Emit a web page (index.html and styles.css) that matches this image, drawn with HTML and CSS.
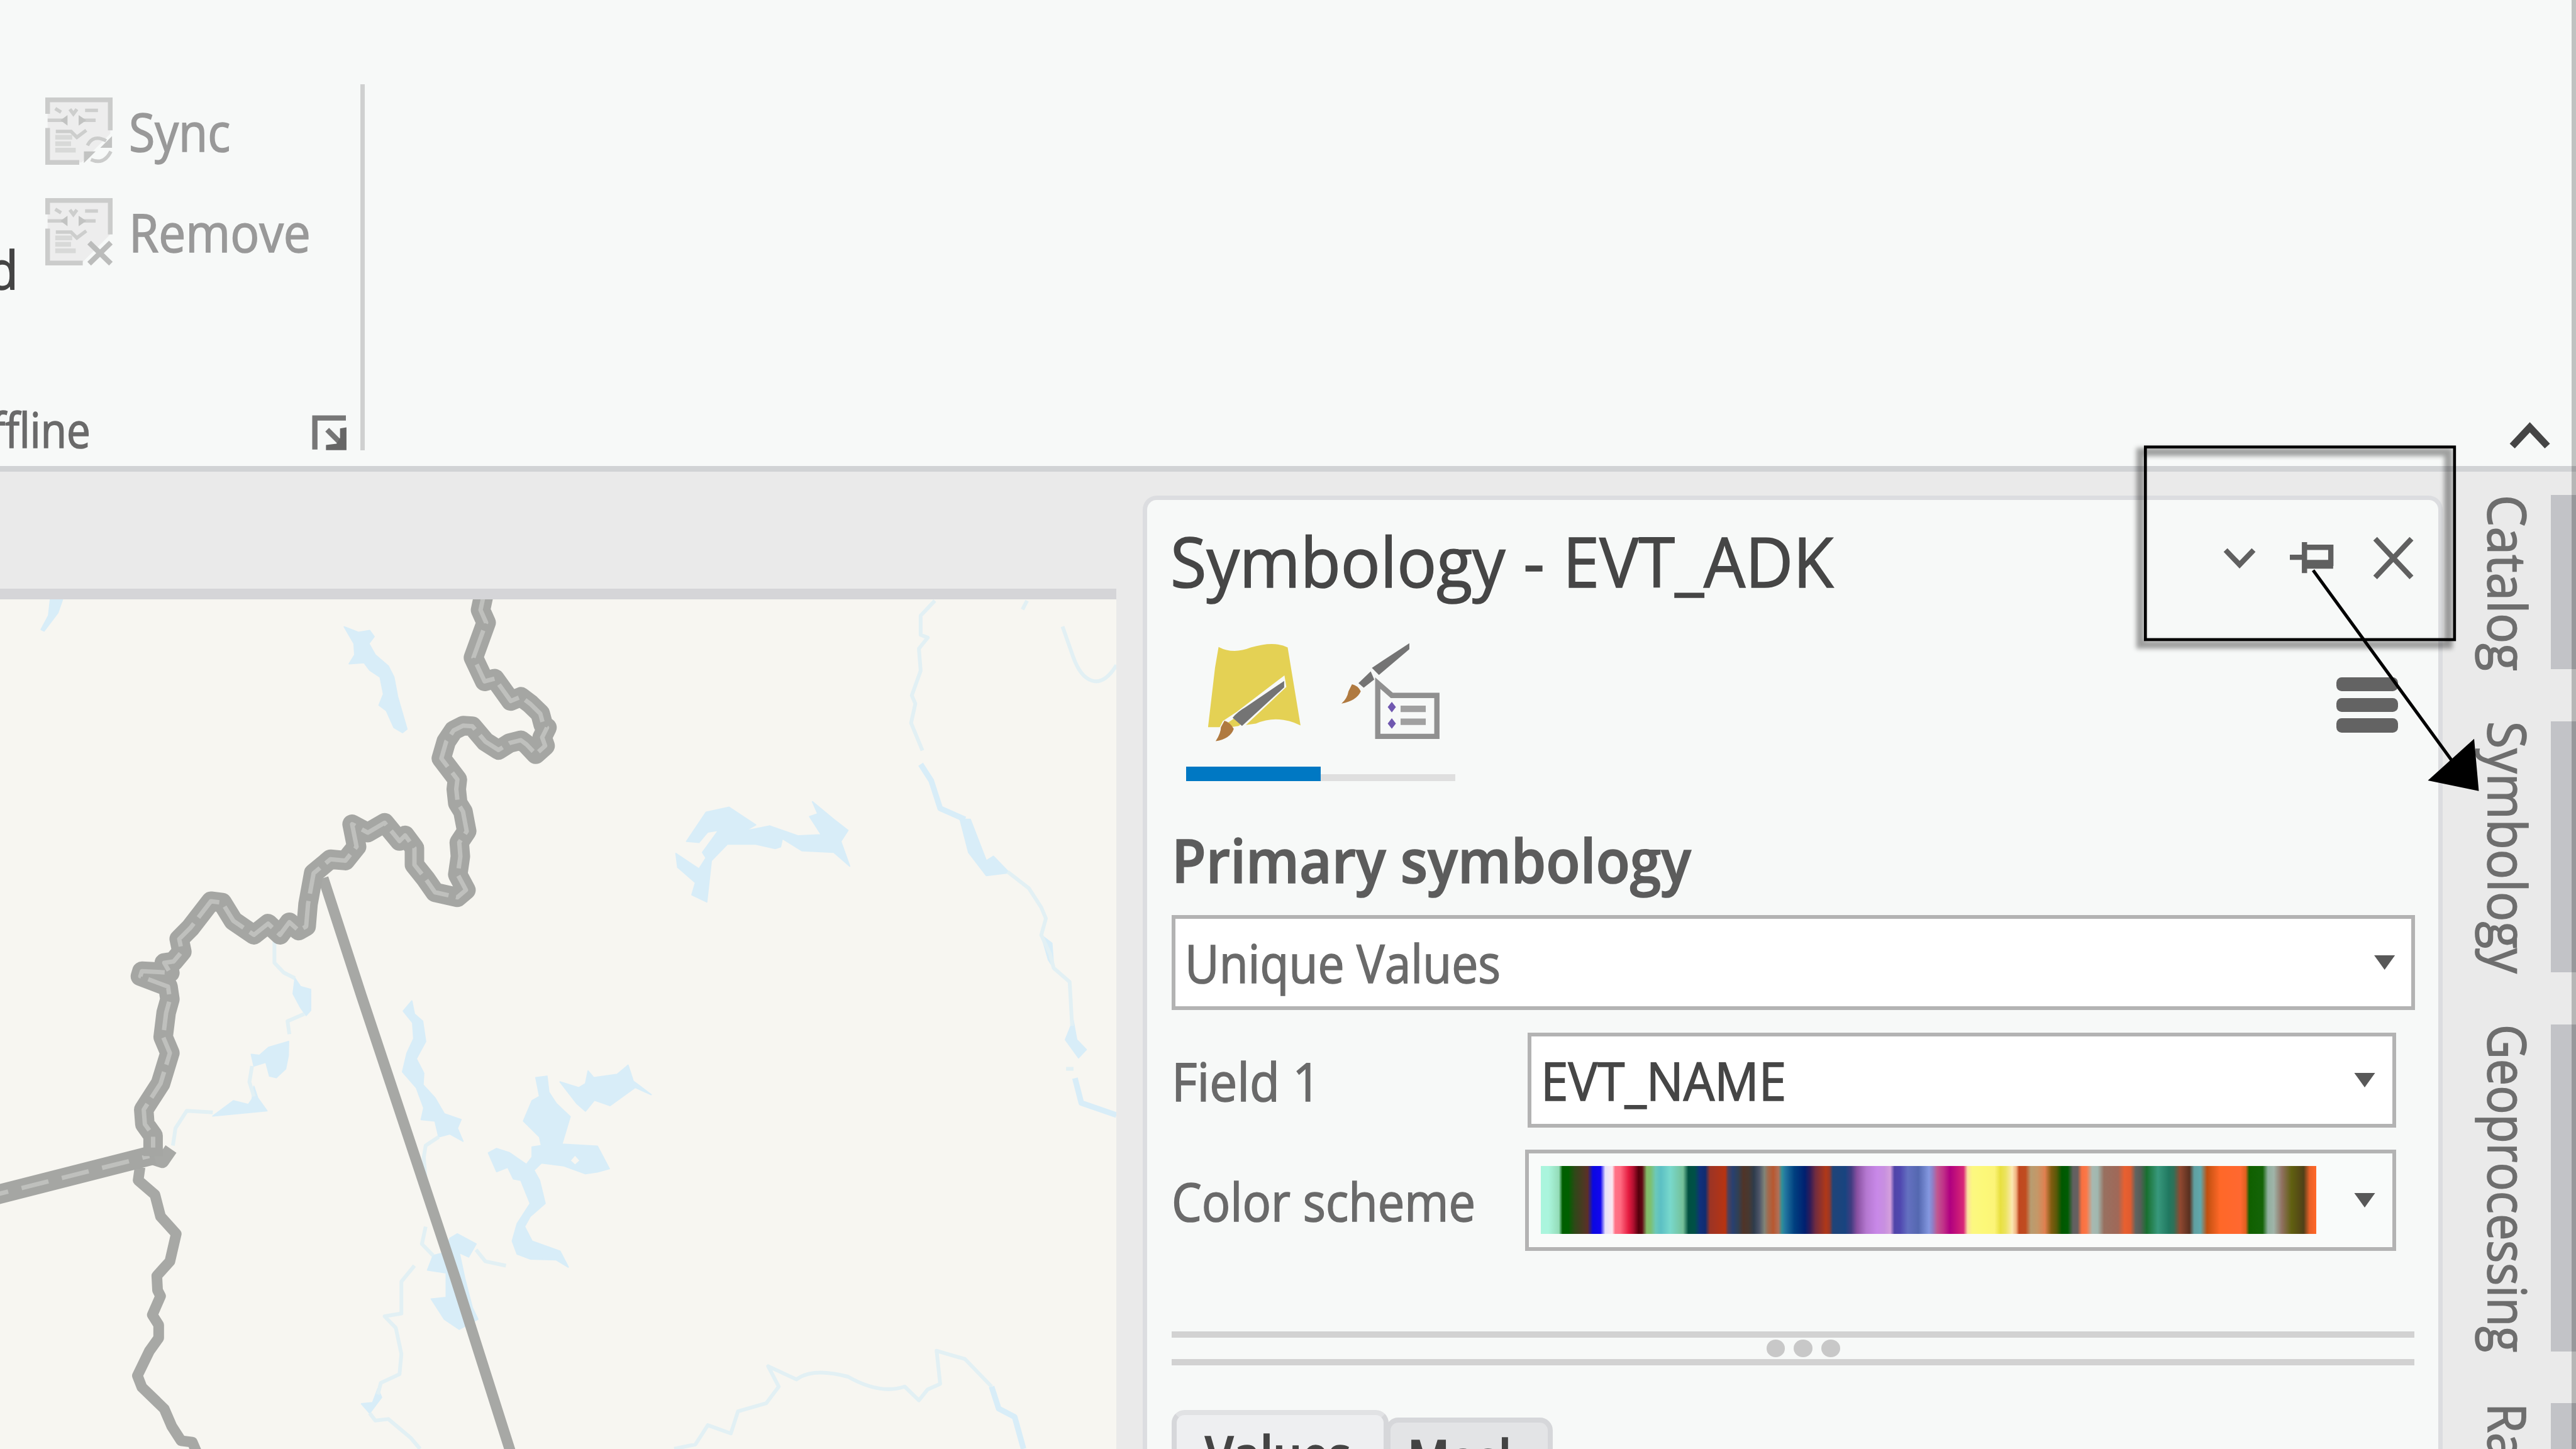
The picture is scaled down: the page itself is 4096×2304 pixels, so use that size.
FILE: index.html
```html
<!DOCTYPE html>
<html lang="en">
<head>
<meta charset="utf-8">
<title>Symbology</title>
<link rel="stylesheet" href="styles.css">
</head>
<body>
<div class="app">
  <header class="ribbon">
    <div class="group">
      <div class="group-body">
        <div class="big-button"><span class="fit">d</span></div>
        <div class="commands">
          <div class="command">
            <svg class="command-icon" viewBox="0 0 115 115">
              <path class="doc-fill" d="M4 4H111V62L62 111H4z"/>
              <path class="doc-line" d="M4 28V4H111V56M4 52V111H58"/>
              <path class="doc-mark" d="M4 39H34M86 39H60M17 19l10 6M42 20l6 8 6-8M68 22H90M18 58H44l10 10 16-12"/>
              <path class="doc-dark" d="M38 30V48L26 39zM57 30V48L70 39z"/>
              <path class="doc-text" d="M17 68H46M17 79H44M17 90H52"/>
              <path class="doc-line thin" d="M72 82Q82 62 104 74M112 92Q100 116 78 106"/>
              <path class="doc-dark" d="M114 66V86H94zM66 112V92H86z"/>
            </svg>
            <span class="fit sync">Sync</span>
          </div>
          <div class="command">
            <svg class="command-icon" viewBox="0 0 115 115">
              <path class="doc-fill" d="M4 4H111V62L62 111H4z"/>
              <path class="doc-line" d="M4 28V4H111V62M4 52V111H64"/>
              <path class="doc-mark" d="M4 39H34M86 39H60M17 19l10 6M42 20l6 8 6-8M68 22H90M18 58H44l10 10 16-12"/>
              <path class="doc-dark" d="M38 30V48L26 39zM57 30V48L70 39z"/>
              <path class="doc-text" d="M17 68H46M17 79H44M17 90H52"/>
              <path class="doc-cross" d="M75 76L112 112M112 76L75 112"/>
            </svg>
            <span class="fit remove">Remove</span>
          </div>
        </div>
      </div>
      <div class="group-footer">
        <span class="group-name"><span class="fit">ffline</span></span>
        <svg class="launcher" viewBox="0 0 61 62">
          <path d="M5 60V6H58" class="l1"/>
          <path d="M26 26L50 50" class="l1"/>
          <path d="M59 22V61H24V52L42 50L48 40V24z"/>
        </svg>
      </div>
    </div>
    <div class="group-divider"></div>
    <svg class="collapse" viewBox="0 0 70 44"><path d="M5 40L35 8L65 40"/></svg>
  </header>

  <div class="workspace">
    <main class="map-pane">
      <div class="view-tabs"></div>
      <svg class="map" viewBox="0 1024 1907 1451" preserveAspectRatio="none">
        <g transform="translate(0 980) scale(.63776 .47832)">
          <g class="lake">
            <path d="M135 90H168L155 140L118 205L110 200L130 150z"/>
            <path d="M922 190L960 210L990 203L1002 225L988 250L1005 290L1040 330L1055 370L1065 440L1090 555L1078 568L1055 550L1035 490L1015 470L1027 430L1018 370L990 345L975 318L935 322L950 290L948 250z"/>
            <path d="M790 1445L805 1475L832 1485L832 1560L820 1578L805 1550L785 1500z"/>
          </g>
          <path class="stream" d="M735 1310L735 1390L760 1425L790 1445"/>
        </g>
        <g transform="translate(0 1700) scale(.63776 .49428)">
          <g class="lake">
            <path d="M773 160L720 180L695 208L673 205L680 245L712 232L722 280L740 285L765 255L772 210z"/>
            <path d="M680 315L690 355L715 400L570 418L625 365L665 378L675 360z"/>
            <path d="M1103 20L1110 65L1132 90L1140 160L1115 220L1135 270L1133 310L1165 355L1190 410L1235 430L1225 460L1240 505L1205 480L1175 490L1165 435L1128 430L1135 390L1115 320L1078 265L1090 200L1108 150L1105 95L1080 55z"/>
            <path fill-rule="evenodd" d="M1435 285L1465 280L1470 335L1490 375L1527 420L1505 515L1600 522L1632 600L1600 611L1568 617L1510 590L1450 580L1430 605L1445 640L1460 720L1420 765L1405 800L1425 850L1500 885L1522 940L1490 915L1420 912L1385 895L1372 850L1385 790L1420 720L1395 640L1375 635L1360 595L1330 610L1308 545L1330 530L1365 545L1410 585L1425 560L1425 525L1450 520L1445 490L1402 435L1425 365L1445 350zM1527 572L1540 552L1554 572L1540 588z"/>
            <path d="M1500 300L1550 320L1568 306L1575 262L1590 285L1653 274L1682 242L1696 297L1744 344L1701 319L1634 382L1592 363L1568 401L1545 375z"/>
            <path d="M1225 825L1275 860L1255 905L1230 890L1245 980L1265 1080L1280 1120L1230 1155L1190 1120L1155 1050L1195 1045L1195 960L1145 950L1160 900L1190 890L1205 840z"/>
            <path d="M1012 1360L1022 1390L990 1445L968 1412L998 1408z"/>
          </g>
          <path class="stream" d="M815 65L770 90L775 135M675 245L668 300L680 350M570 405L500 400L470 460L463 520M1175 490L1140 520L1135 560L1140 640M1140 800L1130 860L1160 900M1275 880L1300 920L1355 935"/>
          <path class="stream" d="M1110 935L1075 990L1075 1100L1030 1110L1060 1150L1075 1240L1070 1310L1020 1340L1012 1380M990 1445L1005 1470L1040 1465L1100 1530L1125 1568"/>
        </g>
        <g transform="translate(1000 1000) scale(.60588 .94068)">
          <g class="lake">
            <path d="M285 465L340 412L405 403L480 435L450 446L520 437L600 455L665 453L632 420L655 415L640 393L700 425L740 445L720 465L745 510L700 485L610 482L555 460L550 475L535 478L480 470L400 470L355 500L342 575L300 562L310 540L260 512L255 487L320 515L340 495L330 485L375 445L345 448L320 467z"/>
            <path d="M1056 425L1085 425L1130 500L1150 492L1195 522L1130 527L1080 485z"/>
            <path d="M1375 790L1385 825L1412 843L1390 858L1353 825z"/>
            <path d="M1285 635L1315 650L1320 695L1305 680z"/>
          </g>
          <path class="stream" d="M985 28L945 55L945 90L965 95L940 115L945 155L920 200L930 215L918 250L950 300M1190 520L1250 550L1285 585L1298 605L1285 635L1310 670L1320 695L1365 720L1372 800M1355 878H1376M1345 75L1375 130C1400 175 1450 195 1497 145M1245 28L1232 44M250 1568L310 1560L345 1525L410 1540L430 1500L510 1485L545 1455L515 1418L595 1442Q640 1420 740 1437Q830 1470 900 1455L940 1480L965 1460L1000 1450L990 1390L1070 1405L1145 1455"/>
          <path class="stream wide" d="M945 325L975 355L1000 405L1070 425M1380 895L1398 940L1497 962M1145 1455L1165 1495L1210 1510L1235 1568"/>
        </g>
        <path class="county" d="M552 1500L617 1700L778 2184L872 2480"/>
        <g transform="translate(0 1700) scale(.63776 .49428)">
          <path class="county" d="M375 595L370 640L415 690L430 765L472 825L455 920L420 970L422 1020L430 1040L408 1105L425 1140L425 1185L400 1230L368 1315L380 1355L440 1430L460 1490L485 1540L515 1545L530 1590"/>
          <path class="county spur" d="M400 560L435 575L458 532"/>
          <path class="state" d="M-30 697L412 552"/>
          <path class="state-dash long" d="M-50 702L400 556"/>
        </g>
        <g transform="translate(0 980) scale(.63776 .47832)">
          <path class="state" d="M1295 80L1287 130L1302 175L1268 300L1298 385L1325 375L1368 455L1395 440L1420 465L1447 500L1455 540L1465 550L1452 585L1460 615L1435 645L1410 610L1395 595L1365 605L1335 630L1300 600L1265 545L1240 543L1215 560L1195 600L1182 660L1225 735L1222 770L1226 820L1240 850L1250 920L1230 960L1233 1010L1226 1075L1248 1130L1225 1156L1165 1138L1140 1090L1110 1040L1110 980L1085 935L1070 955L1030 890L985 925L943 895L955 975L925 1025L885 1020L840 1070L825 1180L820 1260L800 1275L775 1245L750 1290L718 1250L680 1290L625 1240L595 1175L565 1170L510 1265L480 1305L487 1350L465 1385L440 1390L455 1425L380 1420L376 1438L450 1475L455 1520L445 1568L437 1655L455 1712L430 1821L385 1914L388 1966L410 2007L410 2080"/>
          <path class="state-dash" d="M1295 80L1287 130L1302 175L1268 300L1298 385L1325 375L1368 455L1395 440L1420 465L1447 500L1455 540L1465 550L1452 585L1460 615L1435 645L1410 610L1395 595L1365 605L1335 630L1300 600L1265 545L1240 543L1215 560L1195 600L1182 660L1225 735L1222 770L1226 820L1240 850L1250 920L1230 960L1233 1010L1226 1075L1248 1130L1225 1156L1165 1138L1140 1090L1110 1040L1110 980L1085 935L1070 955L1030 890L985 925L943 895L955 975L925 1025L885 1020L840 1070L825 1180L820 1260L800 1275L775 1245L750 1290L718 1250L680 1290L625 1240L595 1175L565 1170L510 1265L480 1305L487 1350L465 1385L440 1390L455 1425L380 1420L376 1438L450 1475L455 1520L445 1568L437 1655L455 1712L430 1821L385 1914L388 1966L410 2007L410 2050"/>
        </g>
      </svg>
    </main>

    <section class="panel">
      <div class="panel-header">
        <h1 class="fit title">Symbology - EVT_ADK</h1>
        <div class="panel-tools">
          <svg class="tool-chevron" viewBox="0 0 56 36"><path d="M4 5L28 30L52 5"/></svg>
          <svg class="tool-pin" viewBox="0 0 74 56"><path d="M0 27H22M25 1V54M25 10H70V42"/><path class="thick" d="M25 39H74"/></svg>
          <svg class="tool-close" viewBox="0 0 70 74"><path d="M4 4L66 70M66 4L4 70"/></svg>
        </div>
      </div>

      <div class="mode-row">
        <div class="modes">
          <div class="mode active">
            <svg class="mode-icon first" viewBox="0 0 160 168">
              <path fill="#e4d154" d="M20 5Q45 18 75 6Q115 -6 138 6L160 139Q120 120 84 136L40 142H2L14 40z"/>
              <path fill="none" stroke="#f7f9f8" stroke-width="7" d="M130 60L54 118L30 134L14 166L40 156L60 140L132 72z"/>
              <path fill="#747474" d="M132 63V74L60 140L44 126Q52 116 66 108z"/>
              <path fill="#b07a40" d="M30 131Q40 134 46 145Q40 162 15 166Q24 152 24 142z"/>
            </svg>
          </div>
          <div class="mode">
            <svg class="mode-icon second" viewBox="0 0 168 165">
              <path fill="#747474" d="M116 2V12L64 56L52 44L70 32zM50 50L56 64L38 78L29 70z"/>
              <path fill="#b07a40" d="M18 72Q28 74 33 84Q26 100 0 105Q10 96 12 84z"/>
              <path fill="#f7f9f8" stroke="#909090" stroke-width="9" d="M62 70V161H163V91H86z"/>
              <path fill="none" stroke="#a0a0a0" stroke-width="11" d="M101 114H144M101 136H144"/>
              <path fill="#7058b0" d="M86 102l7 9-7 9-7-9zM86 130l7 9-7 9-7-9z"/>
            </svg>
          </div>
        </div>
        <div class="menu-button"><i></i><i></i><i></i></div>
      </div>

      <h2 class="heading"><span class="fit">Primary symbology</span></h2>
      <div class="combo wide"><span class="fit unique">Unique Values</span><i class="arrow"></i></div>
      <div class="form-row field-row">
        <label class="label"><span class="fit field">Field 1</span></label>
        <div class="combo"><span class="fit name">EVT_NAME</span><i class="arrow"></i></div>
      </div>
      <div class="form-row scheme-row">
        <label class="label"><span class="fit scheme">Color scheme</span></label>
        <div class="combo ramp-combo"><div class="ramp"></div><i class="arrow"></i></div>
      </div>

      <div class="splitter"><i></i><i></i><i></i></div>

      <div class="tabs">
        <div class="tab current"><span class="fit">Values</span></div>
        <div class="tab"><span class="fit">Mask</span></div>
      </div>
    </section>

    <nav class="rail">
      <div class="rail-tab catalog"><span>Catalog</span><i></i></div>
      <div class="rail-tab symbology"><span>Symbology</span><i></i></div>
      <div class="rail-tab geoprocessing"><span>Geoprocessing</span><i></i></div>
      <div class="rail-tab raster"><span>Ra</span><i></i></div>
    </nav>
  </div>

  <div class="window-edge"></div>
  <svg class="callout" viewBox="0 0 4400 2475">
    <defs><filter id="soft" x="-5%" y="-10%" width="110%" height="120%"><feGaussianBlur stdDeviation="4"/></filter></defs>
    <rect x="3656" y="772" width="526" height="329" fill="none" stroke="#000" stroke-opacity=".36" stroke-width="14" filter="url(#soft)"/>
    <rect x="3664.5" y="763.5" width="528" height="329" fill="none" stroke="#000" stroke-width="5"/>
    <path d="M3951 974L4190 1302" fill="none" stroke="#000" stroke-width="5.5"/>
    <path d="M4226 1262L4234 1351L4147 1333z"/>
  </svg>
</div>
</body>
</html>
```
FILE: styles.css
```css
/* 1rem is one hundredth of a 44-unit wide layout */
html { font-size: 93.0909px; }
* { box-sizing: border-box; }
body { margin: 0; overflow: hidden; font-family: "Open Sans", "Noto Sans", sans-serif; font-variant-ligatures: none; }
h1, h2 { margin: 0; }
svg { display: block; overflow: visible; flex: none; }
i { display: block; }

.app { position: relative; width: 4096px; height: 2304px; display: flex; flex-direction: column; overflow: hidden; background: #eaeaea; }
.fit { display: inline-block; white-space: nowrap; font-size: .91rem; transform-origin: 0 50%; transform: scaleX(.925); -webkit-text-stroke: .018rem currentColor; }

/* ribbon */
.ribbon { flex: none; height: 8.06rem; display: flex; align-items: flex-start; background: #f7f9f8; border-bottom: .1rem solid #d1d3d5; }
.group { width: 6.15rem; padding-top: 1.375rem; color: #999; }
.group-body { display: flex; height: 5.33rem; }
.big-button { width: .31rem; padding-top: 2.21rem; display: flex; justify-content: flex-end; overflow: hidden; color: #444; line-height: 2rem; }
.big-button .fit { transform-origin: 100% 50%; }
.commands { margin-left: .46rem; }
.command { height: 1.72rem; display: flex; align-items: center; gap: .28rem; }
.sync { transform: scaleX(.89); }
.remove { transform: scaleX(.905); }
.command-icon { width: 1.15rem; height: 1.15rem; }
.doc-fill { fill: #ededed; }
.doc-line { fill: none; stroke: #cbcccb; stroke-width: 8; }
.doc-line.thin { stroke-width: 6; }
.doc-mark { fill: none; stroke: #cdcecd; stroke-width: 6; }
.doc-text { fill: none; stroke: #d8d9d8; stroke-width: 8; }
.doc-dark { fill: #c2c3c2; }
.doc-cross { fill: none; stroke: #bbbcbb; stroke-width: 9; }
.group-footer { display: flex; align-items: center; height: 1.2rem; color: #6a6a6a; }
.group-name { width: 1.54rem; padding-top: .06rem; display: flex; justify-content: flex-end; overflow: hidden; }
.group-name .fit { font-size: .83rem; transform-origin: 100% 50%; line-height: 1.2rem; transform: scaleX(.87); }
.launcher { width: .61rem; height: .62rem; margin: .16rem 0 0 3.79rem; fill: #666; }
.launcher .l1 { fill: none; stroke: #777; stroke-width: 9; }
.group-divider { width: .08rem; height: 6.26rem; margin-top: 1.436rem; background: #cfd0d0; }
.collapse { width: .7rem; height: .44rem; margin: 7.22rem .44rem 0 auto; fill: none; stroke: #454545; stroke-width: 12; }

/* workspace */
.workspace { flex: 1; min-height: 0; display: flex; }
.map-pane { flex: none; width: 19.07rem; display: flex; flex-direction: column; }
.view-tabs { flex: none; height: 2.18rem; border-bottom: .19rem solid #d5d5d8; }
.map { width: 19.07rem; height: 14.51rem; background: #f7f6f1; overflow: hidden; }
.map path { stroke-linejoin: round; vector-effect: non-scaling-stroke; }
.lake { fill: #d8edf8; stroke: #d8edf8; stroke-width: 2; }
.stream { fill: none; stroke: #e2f0f4; stroke-width: 6; }
.stream.wide { stroke: #d8edf8; stroke-width: 9; }
.county { fill: none; stroke: #a7a8a5; stroke-width: 17; }
.county.spur { stroke-width: 21; }
.state { fill: none; stroke: #a5a6a3; stroke-width: 31; }
.state-dash { fill: none; stroke: #bfc0bd; stroke-width: 7; stroke-dasharray: 46 12; }
.state-dash.long { stroke-dasharray: 44 22; }

/* panel */
.panel { flex: none; width: 22.2rem; margin: .41rem 0 0 .45rem; padding: 0 .36rem 0 .42rem; border: .08rem solid #dcdde0; border-bottom: 0; border-radius: .24rem .24rem 0 0; background: #f7f9f8; display: flex; flex-direction: column; color: #6a6a6a; }
.panel > * { flex: none; }
.panel-header { height: 2.05rem; display: flex; justify-content: space-between; align-items: center; }
.title { font-size: 1.19rem; font-weight: 400; color: #464646; transform: scaleX(.945); word-spacing: .02rem; margin-left: -.02rem; }
.panel-tools { display: flex; align-items: center; margin: -.08rem .05rem 0 0; fill: none; stroke: #606060; stroke-width: 9; }
.tool-chevron { width: .56rem; height: .36rem; margin-right: .58rem; }
.tool-pin { width: .74rem; height: .56rem; margin-right: .68rem; }
.tool-pin .thick { stroke-width: 15; }
.tool-close { width: .7rem; height: .74rem; }
.mode-row { height: 2.75rem; display: flex; justify-content: space-between; }
.modes { display: flex; margin-left: .245rem; }
.mode { width: 2.3rem; height: 2.75rem; border-bottom: .12rem solid #dfdfdf; }
.mode.active { border-bottom: .25rem solid #0078c3; }
.mode-icon.first { width: 1.6rem; height: 1.68rem; margin: .4rem 0 0 .35rem; }
.mode-icon.second { width: 1.68rem; height: 1.65rem; margin: .37rem 0 0 .35rem; }
.menu-button { display: flex; flex-direction: column; gap: .11rem; margin: .975rem .33rem 0 0; }
.menu-button i { width: 1.05rem; height: .24rem; border-radius: .09rem; background: #636363; }
.heading { height: 2.28rem; padding-top: .16rem; line-height: 2rem; font-weight: 600; color: #5c5c5c; }
.heading .fit { font-size: 1.04rem; line-height: 2rem; transform: scaleX(.92); }
.combo { flex: 1; height: 1.63rem; border: .07rem solid #b3b3b3; background: #fff; display: flex; align-items: center; justify-content: space-between; padding: 0 .29rem 0 .16rem; }
.combo.wide { flex: none; width: 21.24rem; padding-right: .28rem; }
.combo .arrow { width: .36rem; height: .25rem; background: #585858; clip-path: polygon(0 0, 100% 0, 50% 100%); }
.form-row { display: flex; align-items: center; padding-right: .36rem; }
.field-row { margin-top: .38rem; }
.scheme-row { margin-top: .37rem; }
.label { width: 6.08rem; padding-bottom: .06rem; }
.scheme-row .label { width: 6.04rem; }
.unique { transform: scaleX(.885); }
.scheme { transform: scaleX(.895); }
.name { color: #464646; }
.ramp-combo { height: 1.73rem; padding-left: .2rem; background: #f9fbfa; }
.ramp { width: 13.24rem; height: 1.16rem; background: linear-gradient(90deg,
  #aaf5dd .13rem, #94dcb8 .31rem, #005f00 .37rem, #006000 .47rem, #2f4818 .58rem, #5b3028 .8rem, #0a08e0 .89rem, #1206f0 1.02rem,
  #e6e0fa 1.1rem, #fbe8f0 1.22rem, #ff7488 1.27rem, #ff6a80 1.36rem, #e41c40 1.5rem, #b01030 1.58rem, #55000c 1.67rem, #600814 1.73rem,
  #84bc68 1.81rem, #7ec070 1.875rem, #6cc8b8 1.96rem, #5cc0c4 2.05rem, #78d8cc 2.21rem, #74c098 2.43rem, #005040 2.52rem, #005048 2.63rem,
  #10307c 2.72rem, #102c70 2.81rem, #9c3424 2.89rem, #a43420 2.97rem, #b83410 3.15rem, #504058 3.2rem, #284070 3.28rem, #304054 3.37rem,
  #503428 3.46rem, #483830 3.55rem, #2e3c4c 3.64rem, #4c5468 3.73rem, #808478 3.82rem, #a06c50 3.88rem, #b85830 3.97rem, #b07058 4.06rem,
  #309098 4.12rem, #2478a0 4.17rem, #004080 4.33rem, #002070 4.51rem, #301c58 4.6rem, #702c40 4.69rem, #b03818 4.87rem, #983828 4.93rem,
  #204478 4.99rem, #184480 5.2rem, #403c80 5.3rem, #8850a0 5.4rem, #b478d0 5.56rem, #c888e8 5.74rem, #c890e0 5.87rem, #d4a0dc 5.97rem,
  #5044a8 6.04rem, #5048b0 6.14rem, #6470c0 6.27rem, #5468b0 6.45rem, #8498e0 6.63rem, #9080c8 6.69rem, #c05890 6.77rem, #c03088 6.88rem,
  #b00080 6.99rem, #c81878 7.13rem, #d82878 7.22rem, #fce0a0 7.29rem, #fcf880 7.37rem, #fcf878 7.59rem, #fcf478 7.75rem, #e8e040 7.85rem,
  #ece460 7.94rem, #fce8b0 8.05rem, #f0b080 8.12rem, #c04820 8.17rem, #c04c20 8.28rem, #b89c70 8.37rem, #c49868 8.48rem, #e08050 8.61rem,
  #805c10 8.72rem, #585808 8.81rem, #005800 8.9rem, #005c04 9rem, #606060 9.09rem, #686060 9.17rem, #f87040 9.24rem, #fc7848 9.32rem,
  #a8b8b0 9.42rem, #a0b8b0 9.51rem, #987060 9.62rem, #a06858 9.86rem, #e86030 9.97rem, #e05c30 10.07rem, #606460 10.16rem, #585c58 10.24rem,
  #187030 10.35rem, #38987c 10.54rem, #207860 10.73rem, #307058 10.81rem, #904830 10.92rem, #583020 11.08rem, #60a0a0 11.16rem, #60a8ac 11.27rem,
  #c05010 11.38rem, #ff6828 11.6rem, #ff6830 11.95rem, #e06020 12.04rem, #106000 12.1rem, #146408 12.33rem, #90b0a0 12.42rem, #a0b4a8 12.52rem,
  #907060 12.66rem, #606010 12.82rem, #504018 13.03rem, #e86028 13.13rem, #ff6828 13.24rem); }
.splitter { width: 21.22rem; height: .58rem; margin-top: 1.38rem; border: solid #d2d2d2; border-width: .11rem 0; display: flex; justify-content: center; align-items: center; gap: .15rem; padding-left: .35rem; }
.splitter i { width: .32rem; height: .3rem; border-radius: 50%; background: #c8c8c8; }
.tabs { display: flex; align-items: flex-start; height: 1rem; margin-top: .76rem; overflow: hidden; }
.tab { width: 2.86rem; height: 2rem; margin: .13rem 0 0 -.05rem; padding: 0 0 0 .29rem; border: .09rem solid #d6d7da; border-radius: .22rem .22rem 0 0; background: #e3e4e6; color: #444; font-weight: 600; line-height: 1.14rem; }
.tab.current { width: 3.7rem; margin: 0; padding: .06rem 0 0 .48rem; background: #eeeff1; border-top-color: #e1e2e4; }
.tab .fit { transform: scaleX(.86); }

/* docked tabs on the right */
.rail { flex: 1; padding: .39rem 0 0 .73rem; display: flex; flex-direction: column; gap: .89rem; }
.rail-tab { flex: none; display: flex; justify-content: space-between; color: #6e6e6e; }
.rail-tab span { writing-mode: vertical-rl; white-space: nowrap; font-size: .91rem; line-height: .8rem; width: .8rem; transform-origin: 50% 0; -webkit-text-stroke: .018rem currentColor; }
.rail-tab i { width: .43rem; background: #c2c3c7; }
.catalog { height: 2.98rem; }
.symbology { height: 4.285rem; }
.geoprocessing { height: 5.585rem; }
.raster { height: 2rem; }
.catalog span { transform: scaleY(.945); }
.symbology span { transform: scaleY(.93); }
.geoprocessing span { transform: scaleY(.89); }
.raster span { transform: scaleY(.9); }

/* drawn over the window */
.window-edge { position: absolute; top: 0; right: 0; bottom: 0; width: .07rem; background: rgba(0, 0, 0, .22); }
.callout { position: absolute; left: 0; top: 0; width: 4096px; height: 2304px; }
```
